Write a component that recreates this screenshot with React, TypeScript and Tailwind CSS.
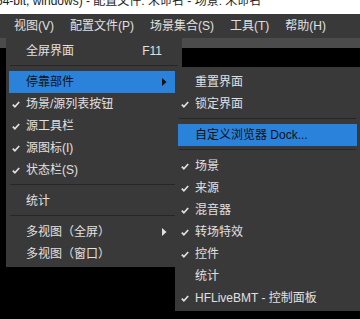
type Item =
  | { sep: true }
  | { sep?: false; label: string; check?: boolean; arrow?: boolean; shortcut?: string; active?: boolean }

const viewMenu: Item[] = [
  { label: '全屏界面', shortcut: 'F11' },
  { sep: true },
  { label: '停靠部件', arrow: true, active: true },
  { label: '场景/源列表按钮', check: true },
  { label: '源工具栏', check: true },
  { label: '源图标(I)', check: true },
  { label: '状态栏(S)', check: true },
  { sep: true },
  { label: '统计' },
  { sep: true },
  { label: '多视图（全屏）', arrow: true },
  { label: '多视图（窗口）' },
]

const dockMenu: Item[] = [
  { label: '重置界面' },
  { label: '锁定界面', check: true },
  { sep: true },
  { label: '自定义浏览器 Dock...', active: true },
  { sep: true },
  { label: '场景', check: true },
  { label: '来源', check: true },
  { label: '混音器', check: true },
  { label: '转场特效', check: true },
  { label: '控件', check: true },
  { label: '统计' },
  { label: 'HFLiveBMT - 控制面板', check: true },
]

const menuBar = ['视图(V)', '配置文件(P)', '场景集合(S)', '工具(T)', '帮助(H)']

function Check() {
  return (
    <svg width="8" height="7" viewBox="0 0 8 7" className="text-[#e1e0e1]">
      <path d="M0.8 3.6 L2.9 5.7 L7.2 1" fill="none" stroke="currentColor" strokeWidth="1.7" />
    </svg>
  )
}

function Arrow({ dark }: { dark?: boolean }) {
  return (
    <svg width="5" height="8" viewBox="0 0 5 8" className={dark ? 'text-[#111]' : 'text-[#e1e0e1]'}>
      <path d="M0 0 L4.5 4 L0 8 Z" fill="currentColor" />
    </svg>
  )
}

function Menu({ items }: { items: Item[] }) {
  return (
    <div className="flex flex-col bg-[#3a393a] py-[2px]">
      {items.map((it, i) =>
        it.sep ? (
          <div key={i} className="mx-[4px] mb-[5px] mt-[3px] h-px bg-[#262626]" />
        ) : (
          <div
            key={i}
            className={`mx-[3px] flex h-[22px] items-center pl-[3px] pr-[12px] leading-[22px] ${
              it.active ? 'bg-[#2a82da] text-[#111]' : 'text-[#e1e0e1]'
            }`}
          >
            <div className="flex w-[14px] items-center">{it.check && <Check />}</div>
            <span className="whitespace-nowrap">{it.label}</span>
            {it.shortcut && <span className="ml-auto mr-[5px]">{it.shortcut}</span>}
            {it.arrow && (
              <span className="ml-auto flex items-center">
                <Arrow dark={it.active} />
              </span>
            )}
          </div>
        )
      )}
    </div>
  )
}

export default function App() {
  return (
    <div className="relative h-[319px] w-[360px] overflow-hidden bg-black font-['Liberation_Sans','Noto_Sans_CJK_SC',sans-serif] text-[12px]">
      {/* window title, cut off at the top */}
      <div className="h-[14px] overflow-hidden bg-white">
        <div className="-mt-[6px] ml-[-4px] whitespace-nowrap leading-[14px] text-[#1c1c1c]">
          64-bit, windows) - 配置文件: 未命名 - 场景: 未命名
        </div>
      </div>

      {/* menu bar */}
      <div className="flex h-[24px] items-center bg-[#3a393a] pl-[6px] text-[#e1e0e1]">
        {menuBar.map((m) => (
          <span key={m} className="px-[8px] leading-[24px]">
            {m}
          </span>
        ))}
      </div>

      <div className="h-[10px] bg-[#4b4b4b]" />

      {/* 视图 dropdown */}
      <div className="absolute left-[6px] top-[38px] w-[176px]">
        <Menu items={viewMenu} />
      </div>

      {/* 停靠部件 submenu */}
      <div className="absolute left-[175px] top-[67px] w-[185px]">
        <div className="pt-[2px] bg-[#3a393a]">
          <Menu items={dockMenu} />
        </div>
      </div>
    </div>
  )
}
